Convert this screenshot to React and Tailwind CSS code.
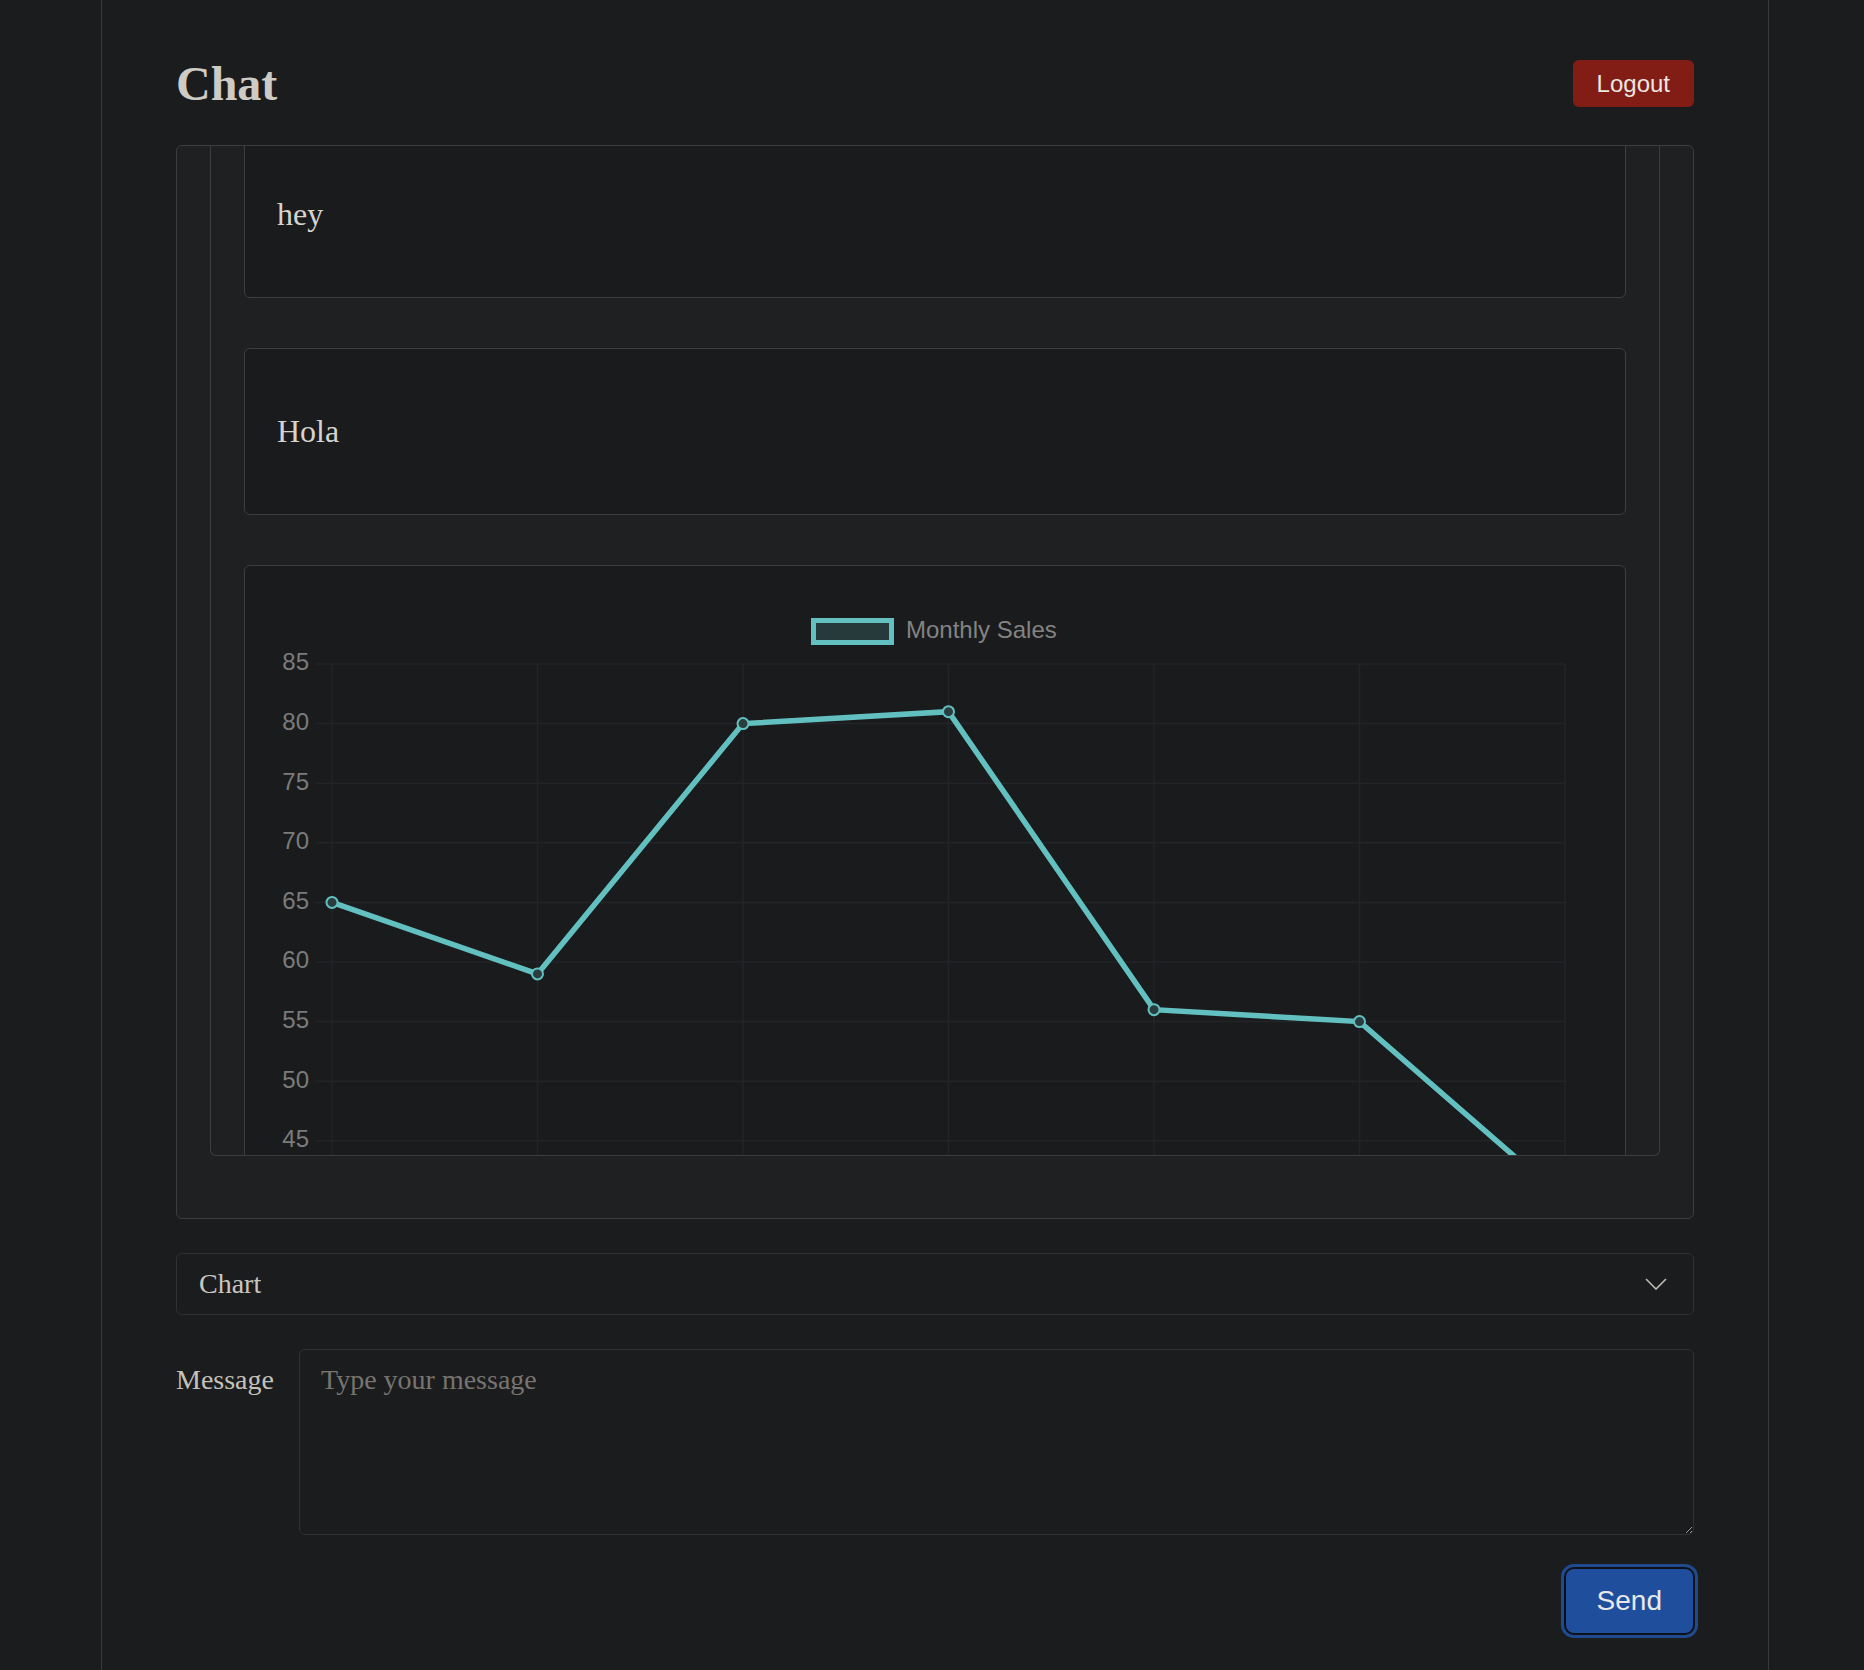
import React from "react";

const SALES = [65, 59, 80, 81, 56, 55, 40];
const TICKS = [85, 80, 75, 70, 65, 60, 55, 50, 45];
const GRID = [...TICKS, 40];

const TEAL = "#62c1c0";

// chart geometry, in px inside the card
const plotLeft = 87;
const plotRight = 1320;
const stepX = (plotRight - plotLeft) / (SALES.length - 1);
const yOf = (v) => 98 + (85 - v) * 11.92;

const SalesChart = () => {
  const points = SALES.map((v, i) => [plotLeft + i * stepX, yOf(v)]);

  return (
    <svg width="1380" height="720" viewBox="0 0 1380 720" className="block">
      {/* legend */}
      <rect x="568.5" y="54.5" width="78" height="22" fill="#273a3b" stroke={TEAL} strokeWidth="5" />
      <text
        x="661"
        y="66"
        dominantBaseline="middle"
        fill="#838383"
        fontSize="24"
        fontFamily="'Liberation Sans', Arial, sans-serif"
      >
        Monthly Sales
      </text>

      {/* grid */}
      {GRID.map((t) => (
        <line key={`h${t}`} x1="71" x2={plotRight} y1={yOf(t)} y2={yOf(t)} stroke="#232427" strokeWidth="1.5" />
      ))}
      {points.map(([x], i) => (
        <line key={`v${i}`} x1={x} x2={x} y1={yOf(85)} y2={yOf(40) + 16} stroke="#232427" strokeWidth="1.5" />
      ))}

      {/* y labels */}
      {TICKS.map((t) => (
        <text
          key={`l${t}`}
          x="64"
          y={yOf(t)}
          textAnchor="end"
          dominantBaseline="middle"
          fill="#7b7b7b"
          fontSize="24"
          fontFamily="'Liberation Sans', Arial, sans-serif"
        >
          {t}
        </text>
      ))}

      <polyline
        points={points.map((p) => p.join(",")).join(" ")}
        fill="none"
        stroke={TEAL}
        strokeWidth="5.5"
      />
      {points.map(([x, y], i) => (
        <circle key={`p${i}`} cx={x} cy={y} r="5.5" fill="#2a3d3e" stroke={TEAL} strokeWidth="2" />
      ))}
    </svg>
  );
};

const MessageCard = ({ children }) => (
  <div className="rounded-md border border-[#3d3e41] bg-[#1a1b1d] px-8 py-8">
    <p className="my-8 text-[32px] leading-[1.15] text-[#d6d3cd]">{children}</p>
  </div>
);

const App = () => {
  return (
    <div className="min-h-[1670px] bg-[#1b1c1e] font-['Liberation_Serif',serif]">
      <div className="ml-[101px] min-h-[1670px] w-[1668px] border-x border-[#38393c] px-[74px] pt-[56px]">
        {/* Header */}
        <div className="flex h-[55px] items-center justify-between">
          <h1 className="text-[48px] font-bold leading-[1.15] text-[#cecbc5]">Chat</h1>
          <button className="rounded-md bg-[#821d16] px-[24px] py-[10px] font-['Liberation_Sans',Arial,sans-serif] text-[24px] leading-[1.15] text-[#ebe7e2]">
            Logout
          </button>
        </div>

        {/* Messages */}
        <div className="mt-[34px] rounded-md border border-[#3c3d40] bg-[#1f2022] px-[33px] pb-[62px]">
          <div className="h-[1010px] overflow-hidden rounded-b-md border-x border-b border-[#3c3d40] px-[33px]">
            <div className="-mt-[15px] flex flex-col gap-[50px]">
              <MessageCard>hey</MessageCard>
              <MessageCard>Hola</MessageCard>
              <div className="rounded-md border border-[#3d3e41] bg-[#1a1b1d]">
                <SalesChart />
              </div>
            </div>
          </div>
        </div>

        {/* Type selector */}
        <div className="mt-[34px] flex items-center justify-between rounded-md border border-[#303134] bg-[#1b1c1e] px-[22px] py-[14px]">
          <span className="text-[28px] leading-[1.15] text-[#c9c6bf]">Chart</span>
          <svg width="22" height="12" viewBox="0 0 22 12" className="mr-[4px]">
            <path d="M1 1 L11 11 L21 1" fill="none" stroke="#bdbab4" strokeWidth="1.6" />
          </svg>
        </div>

        {/* Message input */}
        <div className="mt-[34px] flex items-start gap-[25px]">
          <label htmlFor="message" className="pt-[15px] text-[28px] leading-[1.15] text-[#c4c1ba]">
            Message
          </label>
          <textarea
            id="message"
            placeholder="Type your message"
            className="h-[186px] flex-1 rounded-md border border-[#303134] bg-[#1b1c1e] px-[21px] py-[14px] text-[28px] leading-[1.15] text-[#d6d3cd] outline-none [color-scheme:dark] placeholder:text-[#77746f]"
          />
        </div>

        <div className="mt-[34px] flex justify-end">
          <button className="mr-[1px] rounded-lg bg-[#1f4f9c] px-[31px] py-[16px] font-['Liberation_Sans',Arial,sans-serif] text-[28px] leading-[1.15] text-[#e8e8ea] shadow-[0_0_0_2px_#0e1117,0_0_0_5px_#1f4a8e]">
            Send
          </button>
        </div>
      </div>
    </div>
  );
};

export default App;
